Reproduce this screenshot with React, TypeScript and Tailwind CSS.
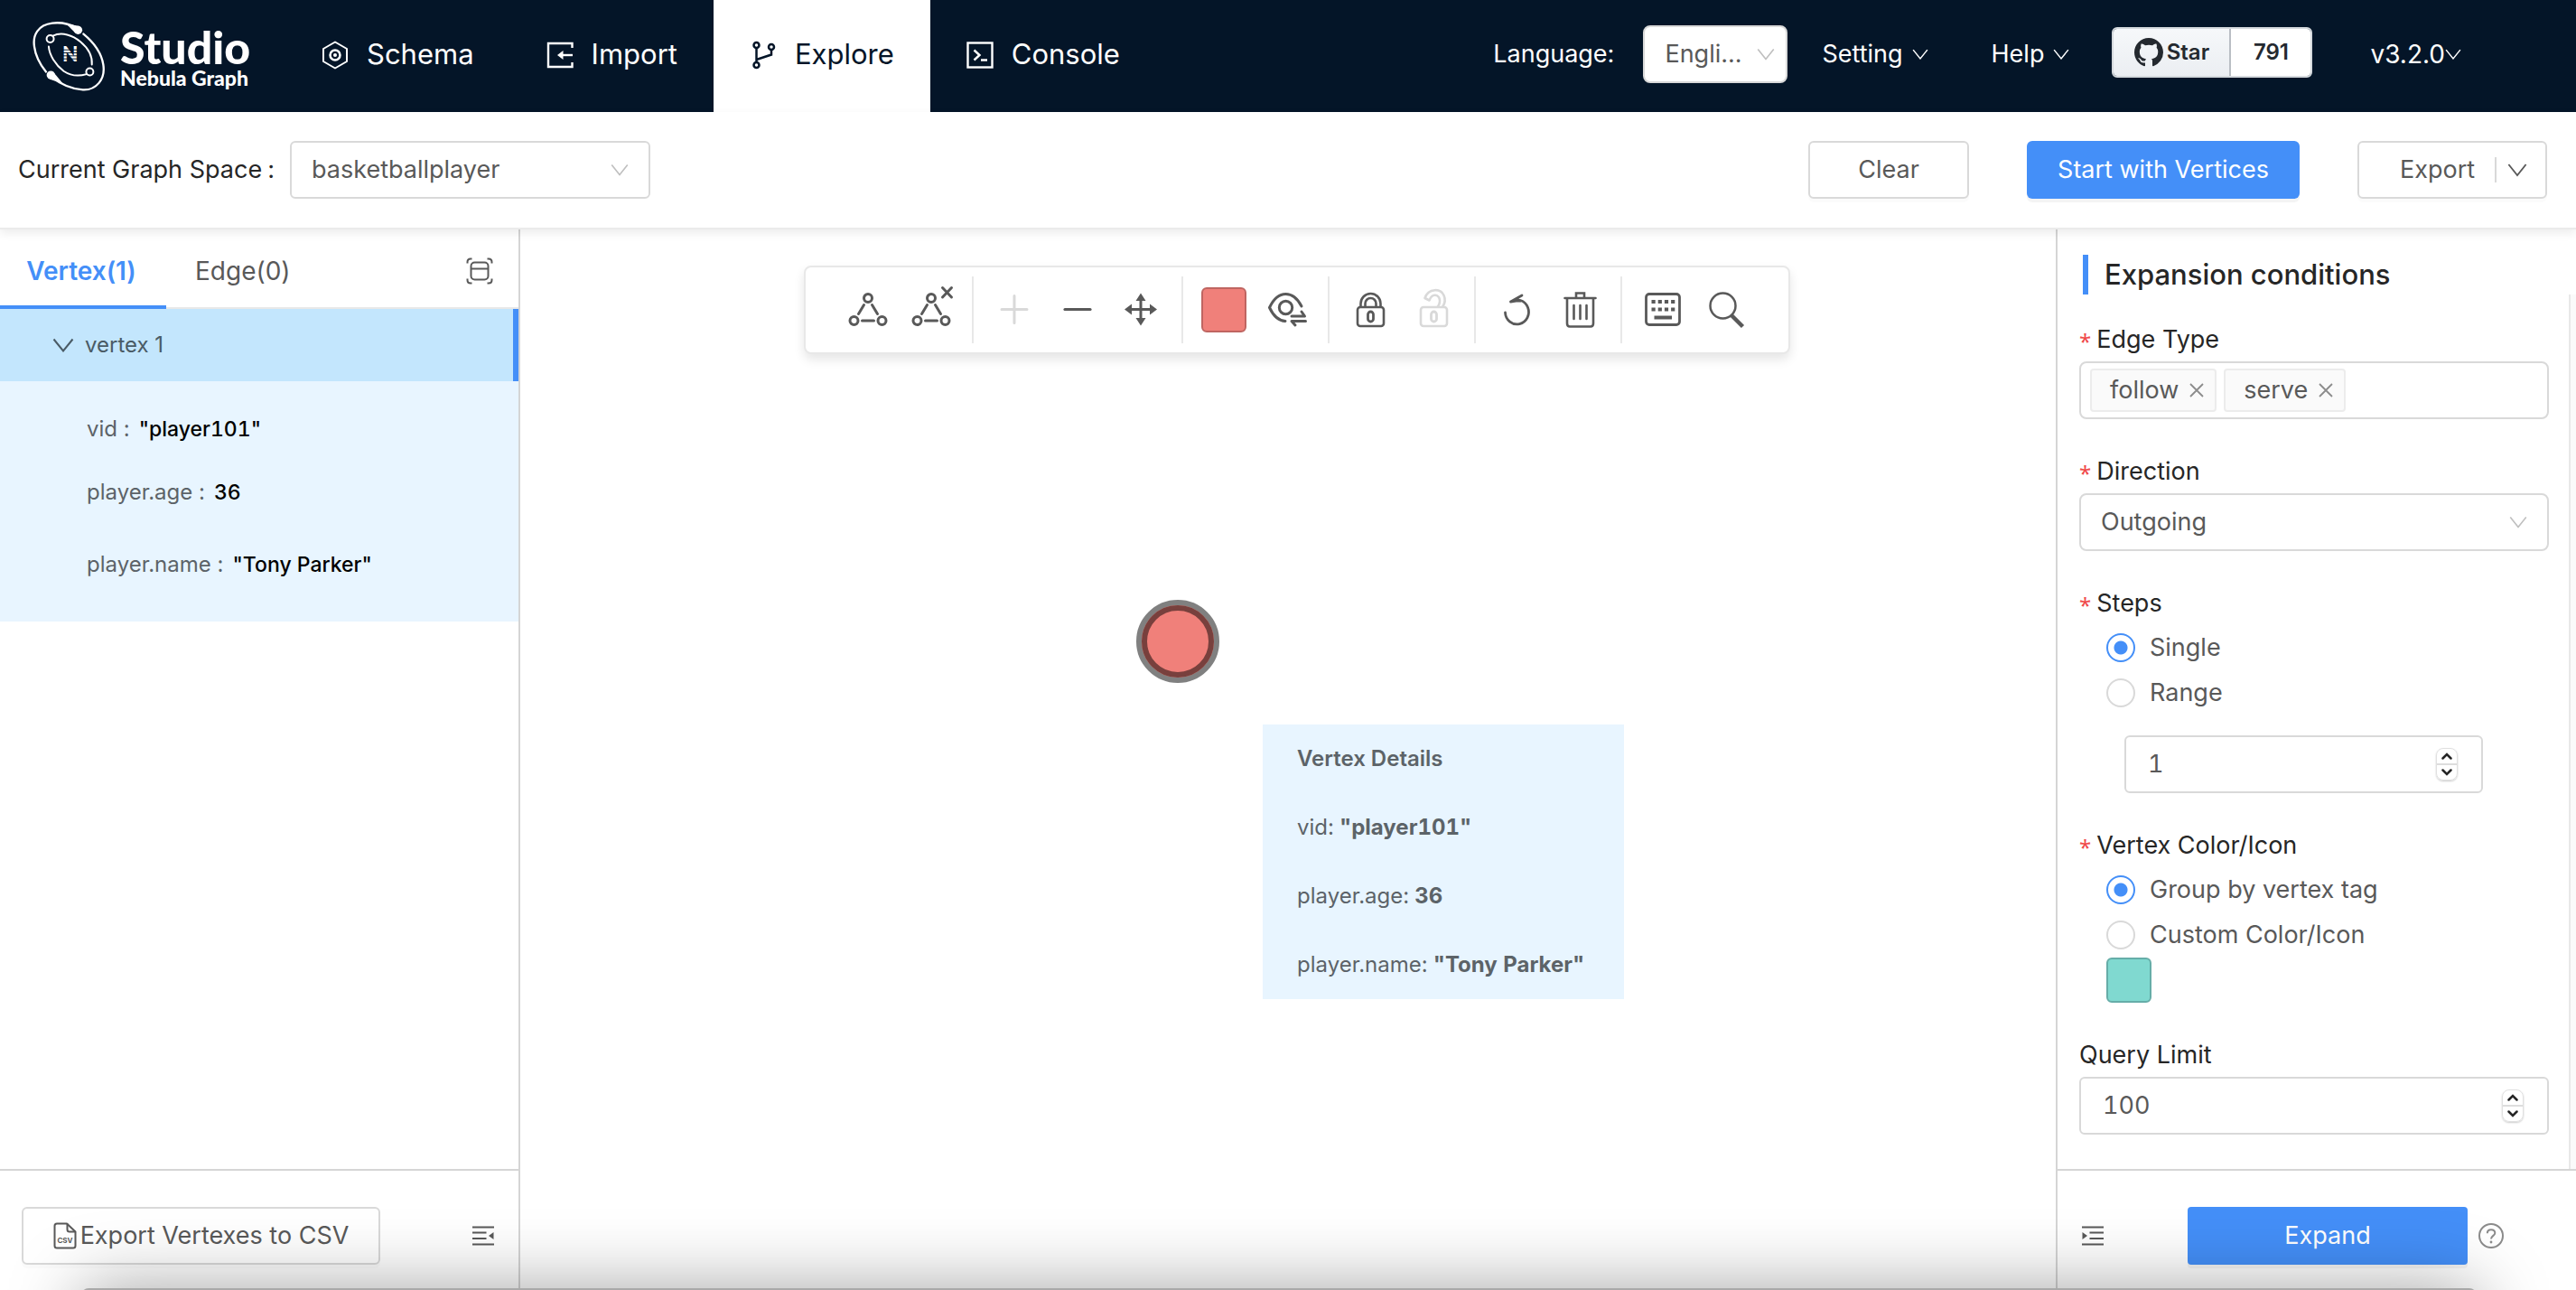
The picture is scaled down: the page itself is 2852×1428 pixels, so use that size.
import React, { useState } from "react";

function Chevron({ className = "" }: { className?: string }) {
  return (
    <svg viewBox="0 0 24 16" className={className} fill="none" stroke="currentColor" strokeWidth="2" aria-hidden="true">
      <path d="M1.5 1.5 12 14.5 22.5 1.5" />
    </svg>
  );
}

function Logo() {
  return (
    <a href="#" className="flex items-center gap-4 text-white" aria-label="Nebula Graph Studio">
      <svg viewBox="38 36 244 238" className="h-[79px] w-[81px]" fill="none" stroke="currentColor" strokeWidth="7" strokeLinecap="round" aria-hidden="true">
        <path d="M188 60C160 46 132 40 104 44C56 50 38 84 44 122C48 154 62 180 83 206" />
        <path d="M208 80C242 108 268 144 274 182C282 232 250 268 206 266C168 264 130 246 102 224" />
        <circle cx="190" cy="67" r="14" fill="currentColor" stroke="none" />
        <path d="M150 46L196 54L180 76Z" fill="currentColor" stroke="none" />
        <circle cx="99" cy="217" r="14" fill="currentColor" stroke="none" />
        <path d="M94 230L110 210L140 246Z" fill="currentColor" stroke="none" />
        <circle cx="97" cy="96" r="12" strokeWidth="6" />
        <path d="M106 86C136 72 172 84 198 106C222 126 238 154 236 182" strokeWidth="6" />
        <path d="M92 122C94 150 114 182 142 204C166 220 192 222 218 214" strokeWidth="6" />
        <circle cx="229" cy="206" r="12" strokeWidth="6" />
        <text x="164" y="173" textAnchor="middle" fontFamily="Lato, sans-serif" fontWeight="900" fontSize="68" fill="currentColor" stroke="none">N</text>
        <path d="M136 133H192M136 143H192M136 153H192M136 163H192" stroke="#041528" strokeWidth="3" strokeLinecap="butt" />
      </svg>
      <span className="flex flex-col pt-1 font-['Lato',sans-serif] font-black">
        <span className="text-[50px] leading-[44px]">Studio</span>
        <span className="text-[23px] leading-[24px]">Nebula Graph</span>
      </span>
    </a>
  );
}

function NavTab({ label, active, icon, onClick }: { label: string; active: boolean; icon: React.ReactNode; onClick: () => void }) {
  return (
    <button
      type="button"
      onClick={onClick}
      className={
        "flex items-center gap-5 px-10 pb-[3px] text-[31px] " + (active ? "bg-white text-[#041528]" : "text-white")
      }
    >
      {icon}
      <span>{label}</span>
    </button>
  );
}

const navIcon = "h-8 w-[30px]";

const tabs = [
  {
    label: "Schema",
    icon: (
      <svg viewBox="0 0 30 32" className={navIcon} fill="none" stroke="currentColor" strokeWidth="2" strokeLinejoin="round">
        <path d="M15 1.500 28 9V23L15 30.500 2 23V9Z" />
        <circle cx="15" cy="16" r="5.500" strokeWidth="2.500" />
        <circle cx="15" cy="16" r="2" fill="currentColor" stroke="none" />
      </svg>
    ),
  },
  {
    label: "Import",
    icon: (
      <svg viewBox="0 0 30 32" className={navIcon} fill="none" stroke="currentColor" strokeWidth="2.400">
        <path d="M28.500 8V3H2V29H28.500V24" />
        <path d="M29 16H16" />
        <path d="M12 16 18.500 11V21Z" fill="currentColor" stroke="none" />
      </svg>
    ),
  },
  {
    label: "Explore",
    icon: (
      <svg viewBox="0 0 30 32" className={navIcon} fill="none" stroke="currentColor" strokeWidth="2.500">
        <circle cx="7.500" cy="5" r="3" />
        <circle cx="7.500" cy="27" r="3" />
        <circle cx="24" cy="7" r="3" />
        <path d="M7.500 8V24M24 10V15.500L7.500 21" />
      </svg>
    ),
  },
  {
    label: "Console",
    icon: (
      <svg viewBox="0 0 30 32" className={navIcon} fill="none" stroke="currentColor" strokeWidth="2.400">
        <rect x="1.500" y="2.500" width="27" height="27" />
        <path d="M8.500 10.500 14.500 16 8.500 21.500M16 21.500H23" />
      </svg>
    ),
  },
];

function Header() {
  const [tab, setTab] = useState("Explore");
  return (
    <header className="flex h-[124px] shrink-0 items-stretch bg-[#041528] pl-9 text-white">
      <div className="flex w-[280px] items-center">
        <Logo />
      </div>
      <nav className="flex">
        {tabs.map((t) => (
          <NavTab key={t.label} label={t.label} icon={t.icon} active={tab === t.label} onClick={() => setTab(t.label)} />
        ))}
      </nav>
      <div className="ml-auto flex items-center pr-[127px] pb-1 text-[27px]">
        <label htmlFor="language">Language:</label>
        <div className="relative ml-8 h-16 w-40">
          <select
            id="language"
            className="h-full w-full appearance-none rounded-lg border-2 border-[#d9d9d9] bg-white pl-[22px] text-[#595959]"
          >
            <option>Engli...</option>
          </select>
          <Chevron className="pointer-events-none absolute top-6 right-3.5 h-4 w-5 text-[#bfbfbf]" />
        </div>
        <button type="button" className="ml-[38px] flex items-center gap-2.5">
          Setting <Chevron className="h-3 w-[18px]" />
        </button>
        <button type="button" className="ml-[70px] flex items-center gap-2.5">
          Help <Chevron className="h-3 w-[18px]" />
        </button>
        <div className="mb-1 ml-[47px] flex h-14 items-stretch overflow-hidden rounded-md border-2 border-[#d5d9dd] text-2xl font-semibold text-[#24292f]">
          <a href="#star" className="flex w-[130px] items-center justify-center gap-1 border-r-2 border-[#b9bec4] bg-linear-to-b from-[#f6f8fa] to-[#ebeef2]">
            <svg viewBox="0 0 16 16" className="h-8 w-8" fill="currentColor" aria-hidden="true">
              <path d="M8 0C3.580 0 0 3.580 0 8c0 3.540 2.290 6.530 5.470 7.590.4.070.55-.17.55-.38 0-.19-.01-.82-.01-1.490-2.010.37-2.530-.49-2.690-.94-.09-.23-.48-.94-.82-1.130-.28-.15-.68-.52-.01-.53.63-.01 1.080.58 1.230.82.72 1.210 1.870.87 2.330.66.07-.52.28-.87.51-1.070-1.780-.2-3.640-.89-3.640-3.950 0-.87.31-1.590.82-2.150-.08-.2-.36-1.020.08-2.120 0 0 .67-.21 2.200.82.64-.18 1.320-.27 2-.27s1.360.09 2 .27c1.530-1.040 2.200-.82 2.200-.82.44 1.100.16 1.920.08 2.120.51.56.82 1.270.82 2.150 0 3.070-1.870 3.750-3.650 3.950.29.25.54.73.54 1.480 0 1.070-.01 1.930-.01 2.200 0 .21.15.46.55.38A8.010 8.010 0 0 0 16 8c0-4.420-3.580-8-8-8Z" />
            </svg>
            Star
          </a>
          <a href="#stargazers" className="flex w-[88px] items-center justify-center bg-white">791</a>
        </div>
        <button type="button" className="ml-16 flex items-center text-[28px]">
          v3.2.0 <Chevron className="h-3 w-[18px]" />
        </button>
      </div>
    </header>
  );
}

function SpaceBar() {
  return (
    <section className="z-10 flex shrink-0 items-center border-b-2 border-[#ebebeb] bg-white px-5 py-8 pr-8 text-[27px] shadow-[0_4px_10px_rgba(0,0,0,0.08)]">
      <label htmlFor="space" className="w-[301px] text-[#262626]">
        Current Graph Space<span className="ml-1.5">:</span>
      </label>
      <div className="relative h-16 w-[399px]">
        <select id="space" className="h-full w-full appearance-none rounded-md border-2 border-[#d9d9d9] bg-white pl-[22px] text-[#595959]">
          <option>basketballplayer</option>
        </select>
        <Chevron className="pointer-events-none absolute top-6 right-6 h-4 w-5 text-[#bfbfbf]" />
      </div>
      <button type="button" className="ml-auto h-16 w-[178px] rounded-md border-2 border-[#d9d9d9] bg-white text-[#595959] shadow-[0_4px_0_rgba(0,0,0,0.016)]">
        Clear
      </button>
      <button type="button" className="ml-16 h-16 w-[302px] rounded-md bg-[#448ff8] text-white shadow-[0_4px_0_rgba(0,0,0,0.043)]">
        Start with Vertices
      </button>
      <button type="button" className="ml-16 flex h-16 w-[210px] items-center rounded-md border-2 border-[#d9d9d9] bg-white pl-[45px] text-[#595959] shadow-[0_4px_0_rgba(0,0,0,0.016)]">
        Export
        <span className="mr-3 ml-[22px] h-7 w-0.5 bg-[#d9d9d9]" />
        <Chevron className="h-4 w-[22px]" />
      </button>
    </section>
  );
}

const attributes = [
  { name: "vid", value: '"player101"', row: "h-[72px]" },
  { name: "player.age", value: "36", row: "h-[68px]" },
  { name: "player.name", value: '"Tony Parker"', row: "h-[92px]" },
];

function LeftPanel() {
  return (
    <aside className="flex w-[576px] shrink-0 flex-col border-r-2 border-[#d5d5d5] bg-white">
      <div className="flex h-[88px] items-stretch border-b-2 border-[#e8e8e8] text-[28px]" role="tablist">
        <button type="button" role="tab" aria-selected="true" className="-mb-0.5 w-[184px] border-b-4 border-[#448ff8] pt-2 pr-1 text-center font-semibold text-[#448ff8]">
          Vertex(1)
        </button>
        <button type="button" role="tab" aria-selected="false" className="ml-8 pt-1.5 text-[#595959]">
          Edge(0)
        </button>
        <button type="button" aria-label="Expand panel" className="mr-7 ml-auto pt-1.5 text-[#595959]">
          <svg viewBox="0 0 30 30" className="h-[30px] w-[30px]" fill="none" stroke="currentColor" strokeWidth="2">
            <path d="M1.500 6.500V5Q1.500 1.500 5 1.500H6.500M23.500 1.500H25Q28.500 1.500 28.500 5V6.500M28.500 23.500V25Q28.500 28.500 25 28.500H23.500M6.500 28.500H5Q1.500 28.500 1.500 25V23.500" />
            <rect x="5.500" y="5.500" width="19" height="19" rx="4" />
            <path d="M5.500 12.500H24.500" />
          </svg>
        </button>
      </div>
      <button type="button" className="flex h-20 items-center gap-3 border-r-[6px] border-[#448ff8] bg-[#c3e6fd] pl-[58px] text-2xl text-[#4a5b66]">
        <Chevron className="h-4 w-6" />
        vertex 1
      </button>
      <dl className="bg-[#e8f5ff] py-[17px] text-2xl">
        {attributes.map((a) => (
          <div key={a.name} className={"flex items-center gap-2.5 pl-24 " + a.row}>
            <dt className="text-[#5c6368]">{a.name} :</dt>
            <dd className="text-[23px] font-medium text-black tabular-nums">{a.value}</dd>
          </div>
        ))}
      </dl>
      <div className="mt-auto flex h-[134px] items-center justify-between border-t-2 border-[#d5d5d5] pt-3 pr-[27px] pl-6">
        <button type="button" className="flex h-16 w-[397px] items-center justify-center gap-1 rounded-md border-2 border-[#d9d9d9] bg-white text-[27px] text-[#595959] shadow-[0_4px_0_rgba(0,0,0,0.016)]">
          <svg viewBox="0 0 26 30" className="h-[30px] w-[26px]" fill="none" stroke="currentColor" strokeWidth="2" strokeLinejoin="round" aria-hidden="true">
            <path d="M15 1.500H4Q1.500 1.500 1.500 4V26Q1.500 28.500 4 28.500H22Q24.500 28.500 24.500 26V10.500Z" />
            <path d="M15.500 1.500V8Q15.500 10.500 18 10.500H24.500" />
            <text x="13" y="23" textAnchor="middle" fontSize="8" fontWeight="700" fill="currentColor" stroke="none" fontFamily="Inter, sans-serif">CSV</text>
          </svg>
          Export Vertexes to CSV
        </button>
        <button type="button" aria-label="Collapse left panel" className="text-[#595959]">
          <svg viewBox="0 0 24 22" className="h-[22px] w-6" fill="none" stroke="currentColor" strokeWidth="2.200">
            <path d="M0 1.500H24M0 7.500H15.500M0 14H15.500M0 20.500H24" />
            <path d="M18 11 23.500 7V15Z" fill="currentColor" stroke="none" />
          </svg>
        </button>
      </div>
    </aside>
  );
}

const triangle = (
  <>
    <circle cx="21" cy="9" r="4.500" />
    <circle cx="5.500" cy="34" r="4.500" />
    <circle cx="36.500" cy="34" r="4.500" />
    <path d="M16.500 16.500 10.500 26.500M25.500 16.500 31.500 26.500M14.500 34H27.500" />
  </>
);

function Tool({ label, disabled, children }: { label: string; disabled?: boolean; children: React.ReactNode }) {
  return (
    <button
      type="button"
      aria-label={label}
      disabled={disabled}
      className={"flex w-[70px] items-center justify-center " + (disabled ? "text-[#d9d9d9]" : "text-[#595959]")}
    >
      {children}
    </button>
  );
}

const tool = "h-11 w-[42px] overflow-visible";

const Separator = () => <span className="mx-2.5 w-0.5 self-stretch bg-[#e8e8e8]" />;

function Toolbar() {
  return (
    <div className="flex h-[98px] items-center rounded-lg border-2 border-[#e8e8e8] bg-white px-[34px] py-2.5 shadow-[0_6px_12px_rgba(0,0,0,0.1)]" role="toolbar">
      <Tool label="Show relations">
        <svg viewBox="0 0 42 44" className={tool} fill="none" stroke="currentColor" strokeWidth="3" strokeLinecap="round">{triangle}</svg>
      </Tool>
      <Tool label="Clear relations">
        <svg viewBox="0 0 42 44" className={tool} fill="none" stroke="currentColor" strokeWidth="3" strokeLinecap="round">
          {triangle}
          <path d="M33.500-2.500 43.500 8M43.500-2.500 33.500 8" />
        </svg>
      </Tool>
      <Separator />
      <Tool label="Zoom in" disabled>
        <svg viewBox="0 0 42 44" className={tool} fill="none" stroke="currentColor" strokeWidth="3" strokeLinecap="round">
          <path d="M7 21.500H35M21 6.500V36.500" />
        </svg>
      </Tool>
      <Tool label="Zoom out">
        <svg viewBox="0 0 42 44" className={tool} fill="none" stroke="currentColor" strokeWidth="3.200" strokeLinecap="round">
          <path d="M7 21.500H35" />
        </svg>
      </Tool>
      <Tool label="Move">
        <svg viewBox="0 0 42 44" className={tool} fill="none" stroke="currentColor" strokeWidth="3">
          <path d="M8 21.500H34M21 9V35" />
          <path d="M21 3.500 26.500 12H15.500ZM21 39.500 26.500 31H15.500ZM3 21.500 11 15.500V27.500ZM39 21.500 31 15.500V27.500Z" fill="currentColor" stroke="none" />
        </svg>
      </Tool>
      <Separator />
      <Tool label="Vertex colour">
        <span className="h-[50px] w-[50px] rounded-md border-2 border-[#bf6561] bg-[#f0807a]" />
      </Tool>
      <Tool label="Show or hide labels">
        <svg viewBox="0 0 42 44" className={tool} fill="none" stroke="currentColor" strokeWidth="3" strokeLinecap="round" strokeLinejoin="round">
          <path d="M37 18C32 8.500 26 4.500 19.500 4.500 11.500 4.500 5.500 11 1.500 19.500 5.500 28 11.500 34 19 34.500" />
          <circle cx="19.500" cy="19.500" r="7.200" />
          <path d="M37 24 40.500 29H26M41.500 34.500H26L30 39" />
        </svg>
      </Tool>
      <Separator />
      <Tool label="Lock">
        <svg viewBox="0 0 42 44" className={tool} fill="none" stroke="currentColor" strokeWidth="2.600">
          <rect x="7" y="19" width="29" height="21" rx="3" />
          <path d="M10.500 19V15A11 11 0 0 1 32.500 15V19M15.500 19V15A6 6 0 0 1 27.500 15V19" />
          <rect x="18.500" y="24" width="6" height="11" rx="3" strokeWidth="2.800" />
        </svg>
      </Tool>
      <Tool label="Unlock" disabled>
        <svg viewBox="0 0 42 44" className={tool} fill="none" stroke="currentColor" strokeWidth="2.600" strokeLinejoin="round">
          <rect x="7" y="19" width="29" height="21" rx="3" />
          <path d="M31 19C37 10 32-.5 22.500.2 17 .6 13 4.500 11.500 9L16.500 11.500C18 7.500 20.500 5.500 23 5.800 28 6.400 30 12.500 25.500 19" />
          <rect x="18.500" y="24" width="6" height="11" rx="3" strokeWidth="2.800" />
        </svg>
      </Tool>
      <Separator />
      <Tool label="Undo">
        <svg viewBox="0 0 42 44" className={tool} fill="none" stroke="currentColor" strokeWidth="2.800" strokeLinecap="round" strokeLinejoin="round">
          <path d="M8.500 25A13 13.500 0 1 0 14.500 13L27 6M14.500 13 22 11.800A13 13.500 0 0 1 25 12.200" />
        </svg>
      </Tool>
      <Tool label="Delete">
        <svg viewBox="0 0 42 44" className={tool} fill="none" stroke="currentColor" strokeWidth="2.600" strokeLinecap="round">
          <path d="M4.500 9H38.500M17 9V3.500H26V9M7 9V37Q7 40.500 10 40.500H33Q36 40.500 36 37V9M14.500 17V32M21.500 17V32M28.500 17V32" />
        </svg>
      </Tool>
      <Separator />
      <Tool label="Keyboard shortcuts">
        <svg viewBox="0 0 42 44" className={tool} fill="none" stroke="currentColor" strokeWidth="2.800">
          <rect x="2.500" y="4.500" width="37" height="34" rx="3.500" />
          <path d="M8.500 13H34.500M8.500 21.500H34.500" strokeWidth="4" strokeDasharray="4.200 3" />
          <path d="M11.500 30.500H31" strokeWidth="4" />
        </svg>
      </Tool>
      <Tool label="Search">
        <svg viewBox="0 0 42 44" className={tool} fill="none" stroke="currentColor" strokeWidth="2.500">
          <circle cx="17.500" cy="17.500" r="14" />
          <path d="M27 28 39.500 40.500" strokeWidth="4.500" />
        </svg>
      </Tool>
    </div>
  );
}

const details = [
  { name: "vid", value: '"player101"' },
  { name: "player.age", value: "36" },
  { name: "player.name", value: '"Tony Parker"' },
];

function Canvas() {
  return (
    <main className="relative flex min-w-0 flex-1 items-start justify-center bg-white pt-10 pl-5">
      <Toolbar />
      <button
        type="button"
        aria-label="player101"
        className="absolute top-[410px] left-[682px] h-[92px] w-[92px] rounded-full border-[6px] border-[#808080] bg-[#f0807a]"
      >
        <span className="block h-full w-full rounded-full border-[6px] border-[#78403d]" />
      </button>
      <div className="absolute top-[548px] left-[822px] w-[400px] bg-[#e8f5ff] pl-[38px] text-2xl text-[#5c6368]">
        <h2 className="flex h-[76px] items-center font-semibold">Vertex Details</h2>
        {details.map((d) => (
          <p key={d.name} className="flex h-[76px] items-center gap-1.5">
            {d.name}: <b className="font-bold tabular-nums">{d.value}</b>
          </p>
        ))}
      </div>
    </main>
  );
}

function FieldLabel({ id, children, required = true }: { id: string; children: string; required?: boolean }) {
  return (
    <label htmlFor={id} className="flex h-12 items-center text-[27px] text-[#262626]">
      {required && <span className="mr-1.5 pt-1 font-['Noto_Sans',sans-serif] text-2xl text-[#f04a4a]">*</span>}
      {children}
    </label>
  );
}

function Radio({ name, label, defaultChecked }: { name: string; label: string; defaultChecked?: boolean }) {
  return (
    <label className="flex h-[50px] items-center gap-4 text-[27px] text-[#595959]">
      <input
        type="radio"
        name={name}
        defaultChecked={defaultChecked}
        className="h-8 w-8 appearance-none rounded-full border-2 border-[#d9d9d9] bg-white checked:border-[#448ff8] checked:bg-[radial-gradient(circle,#448ff8_7px,#ffffff_8px)]"
      />
      {label}
    </label>
  );
}

function NumberBox({ id, label, value, className }: { id: string; label: string; value: number; className: string }) {
  const [n, setN] = useState(value);
  return (
    <div className={"flex h-16 items-center rounded-md border-2 border-[#d9d9d9] bg-white pl-6 " + className}>
      <input
        id={id}
        type="number"
        aria-label={label}
        value={n}
        onChange={(e) => setN(Number(e.target.value))}
        className="w-full min-w-0 flex-1 appearance-none text-[27px] text-[#595959] tabular-nums outline-none [appearance:textfield] [&::-webkit-inner-spin-button]:appearance-none"
      />
      <div className="flex h-9 w-6 flex-col rounded-lg border border-[#e0e0e0] text-[#262626] shadow-[0_1px_2px_rgba(0,0,0,0.2)]">
        <button type="button" aria-label="Increase" onClick={() => setN(n + 1)} className="flex flex-1 items-center justify-center border-b-2 border-[#dddddd]">
          <svg viewBox="0 0 12 8" className="h-2 w-3" fill="none" stroke="currentColor" strokeWidth="2.500" strokeLinecap="round"><path d="M1.500 6.500 6 2 10.500 6.500" /></svg>
        </button>
        <button type="button" aria-label="Decrease" onClick={() => setN(n - 1)} className="flex flex-1 items-center justify-center">
          <svg viewBox="0 0 12 8" className="h-2 w-3" fill="none" stroke="currentColor" strokeWidth="2.500" strokeLinecap="round"><path d="M1.500 1.500 6 6 10.500 1.500" /></svg>
        </button>
      </div>
    </div>
  );
}

function Tag({ children }: { children: string }) {
  return (
    <span className="flex h-12 items-center gap-3 rounded border-2 border-[#ececec] bg-[#fafafa] pr-3 pl-5">
      {children}
      <button type="button" aria-label={"Remove " + children} className="text-[#8c8c8c]">
        <svg viewBox="0 0 16 16" className="h-4 w-4" fill="none" stroke="currentColor" strokeWidth="1.800"><path d="M1 1 15 15M15 1 1 15" /></svg>
      </button>
    </span>
  );
}

function RightPanel() {
  return (
    <aside className="flex w-[576px] shrink-0 flex-col border-l-2 border-[#d5d5d5] bg-white">
      <h2 className="mt-7 ml-7 flex h-11 items-center border-l-[6px] border-[#448ff8] pl-[18px] text-[31px] font-medium text-[#262626]">
        Expansion conditions
      </h2>
      <form className="flex flex-1 flex-col" onSubmit={(e) => e.preventDefault()}>
        <div className="flex flex-1">
          <div className="min-w-0 flex-1 pt-[26px] pr-[22px] pl-6">
            <FieldLabel id="edge-type">Edge Type</FieldLabel>
            <div className="flex h-16 items-center gap-2 rounded-lg border-2 border-[#d9d9d9] pl-2.5 text-[27px] text-[#595959]">
              <Tag>follow</Tag>
              <Tag>serve</Tag>
              <input id="edge-type" className="h-full w-full min-w-0 flex-1 outline-none" />
            </div>

            <div className="pt-[34px]">
              <FieldLabel id="direction">Direction</FieldLabel>
              <div className="relative h-16">
                <select id="direction" className="h-full w-full appearance-none rounded-lg border-2 border-[#d9d9d9] bg-white pl-[22px] text-[27px] text-[#595959]">
                  <option>Outgoing</option>
                </select>
                <Chevron className="pointer-events-none absolute top-6 right-6 h-4 w-5 text-[#bfbfbf]" />
              </div>
            </div>

            <div className="pt-[34px]">
              <FieldLabel id="steps">Steps</FieldLabel>
              <div className="pl-[30px]">
                <Radio name="steps-mode" label="Single" defaultChecked />
                <Radio name="steps-mode" label="Range" />
                <NumberBox id="steps" label="Steps" value={1} className="mt-[22px] ml-5 w-[397px] pr-[26px]" />
              </div>
            </div>

            <div className="pt-[34px]">
              <FieldLabel id="vertex-color">Vertex Color/Icon</FieldLabel>
              <div className="pl-[30px]">
                <Radio name="color-mode" label="Group by vertex tag" defaultChecked />
                <Radio name="color-mode" label="Custom Color/Icon" />
                <button id="vertex-color" type="button" className="block h-[50px] w-[50px] rounded-md border-2 border-[#66ada8] bg-[#80d9d0]" />
              </div>
            </div>

            <div className="pt-[34px]">
              <FieldLabel id="limit" required={false}>Query Limit</FieldLabel>
              <NumberBox id="limit" label="Query Limit" value={100} className="pr-[26px]" />
            </div>
          </div>
          <div className="w-2 border-l-2 border-[#e8e8e8] bg-[#fafafa]" />
        </div>
        <div className="flex h-[134px] items-center border-t-2 border-[#d5d5d5] pt-3 pr-20 pl-[27px]">
          <button type="button" aria-label="Collapse right panel" className="text-[#595959]">
            <svg viewBox="0 0 24 22" className="h-[22px] w-6" fill="none" stroke="currentColor" strokeWidth="2.200">
              <path d="M0 1.500H24M8.500 7.500H24M8.500 14H24M0 20.500H24" />
              <path d="M6 11 .5 7V15Z" fill="currentColor" stroke="none" />
            </svg>
          </button>
          <button type="submit" className="ml-auto h-16 w-[310px] rounded bg-[#448ff8] text-[27px] text-white shadow-[0_4px_0_rgba(0,0,0,0.043)]">
            Expand
          </button>
          <button type="button" aria-label="Help" className="ml-3 text-[#8c8c8c]">
            <svg viewBox="0 0 28 28" className="h-7 w-7" fill="none" stroke="currentColor" strokeWidth="2">
              <circle cx="14" cy="14" r="13" />
              <path d="M9.800 11.200C9.800 8.600 11.600 7.200 14 7.200S18.300 8.700 18.300 11C18.300 13.800 14 14 14 17.500" />
              <circle cx="14" cy="21" r="1.400" fill="currentColor" stroke="none" />
            </svg>
          </button>
        </div>
      </form>
    </aside>
  );
}

export default function App() {
  return (
    <div className="relative flex min-h-screen flex-col overflow-hidden bg-white font-['Inter','Liberation_Sans',sans-serif]">
      <Header />
      <SpaceBar />
      <div className="flex flex-1 items-stretch">
        <LeftPanel />
        <Canvas />
        <RightPanel />
      </div>
      <div className="pointer-events-none absolute right-[110px] -bottom-[198px] left-[90px] h-[200px] rounded-lg bg-[#a9a9a9] shadow-[0_0_80px_rgba(0,0,0,0.36)]" />
    </div>
  );
}
